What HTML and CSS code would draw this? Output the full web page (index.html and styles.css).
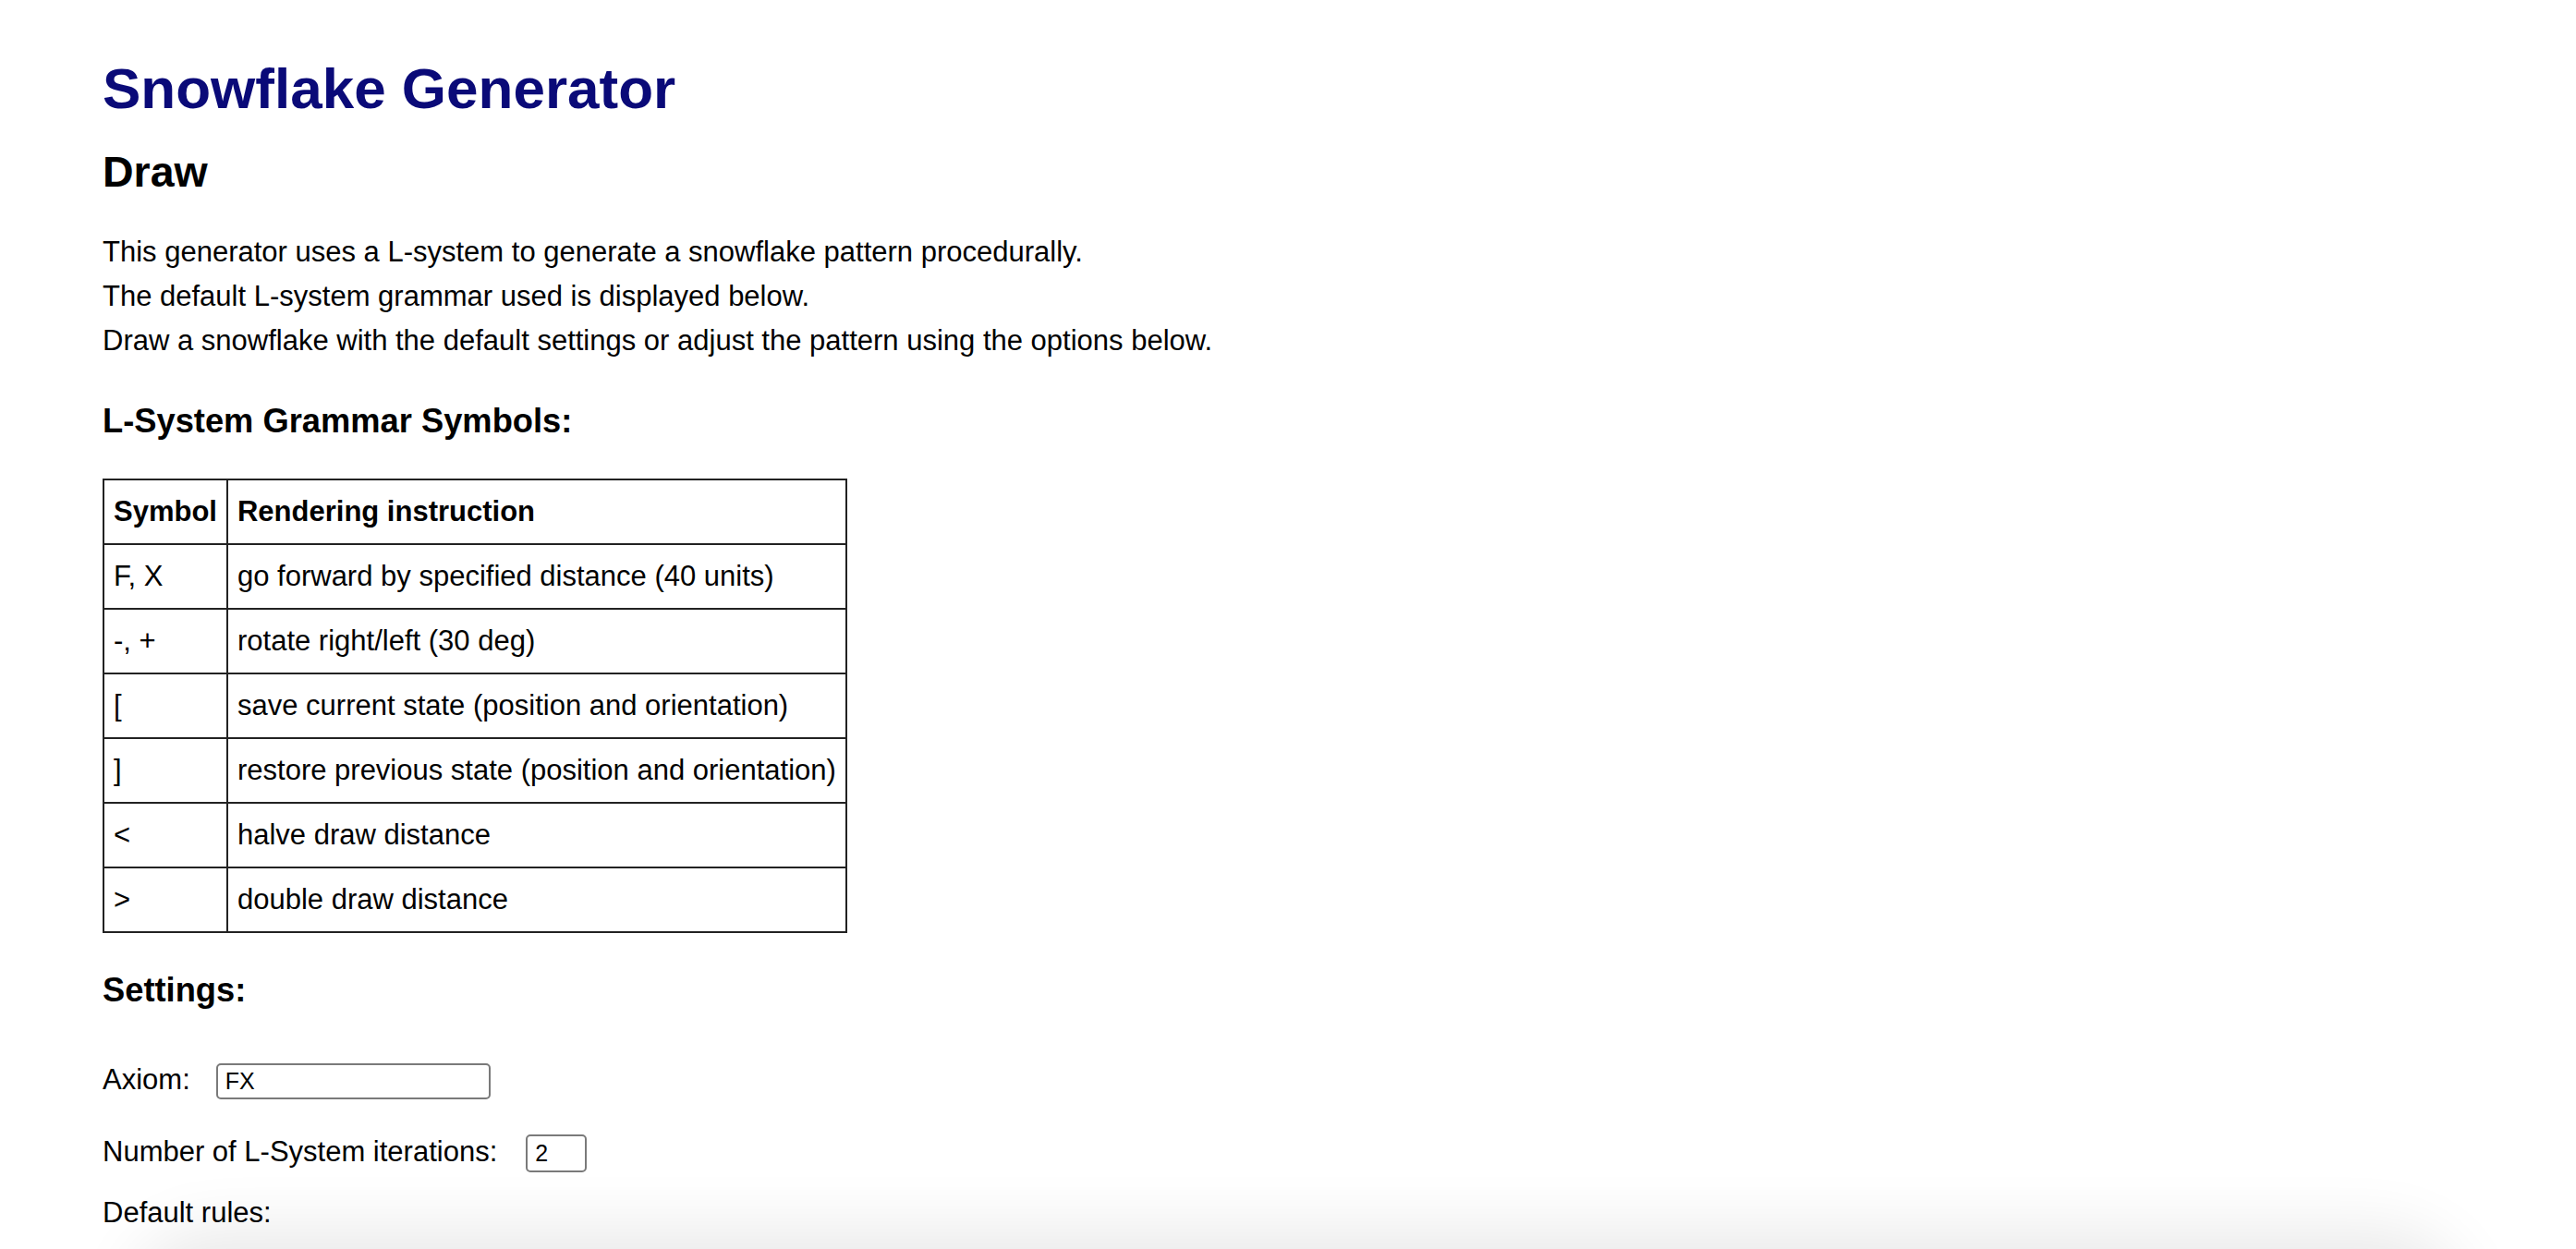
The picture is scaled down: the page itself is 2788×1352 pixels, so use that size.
FILE: index.html
```html
<!DOCTYPE html>
<html lang="en">
<head>
<meta charset="utf-8">
<title>Snowflake Generator</title>
<link rel="stylesheet" href="styles.css">
</head>
<body>
<main class="page">
  <h1 class="title">Snowflake Generator</h1>
  <h2 class="section-title">Draw</h2>
  <div class="intro">
    This generator uses a L-system to generate a snowflake pattern procedurally.<br>
    The default L-system grammar used is displayed below.<br>
    Draw a snowflake with the default settings or adjust the pattern using the options below.
  </div>

  <h3 class="sub-title">L-System Grammar Symbols:</h3>
  <table class="grammar">
    <thead>
      <tr><th>Symbol</th><th>Rendering instruction</th></tr>
    </thead>
    <tbody>
      <tr><td>F, X</td><td>go forward by specified distance (40 units)</td></tr>
      <tr><td>-, +</td><td>rotate right/left (30 deg)</td></tr>
      <tr><td>[</td><td>save current state (position and orientation)</td></tr>
      <tr><td>]</td><td>restore previous state (position and orientation)</td></tr>
      <tr><td>&lt;</td><td>halve draw distance</td></tr>
      <tr><td>&gt;</td><td>double draw distance</td></tr>
    </tbody>
  </table>

  <h3 class="sub-title settings-title">Settings:</h3>
  <form class="settings">
    <div class="field field-axiom">
      <label for="axiom">Axiom:</label>
      <input id="axiom" class="text-input axiom-input" type="text" value="FX">
    </div>
    <div class="field field-iter">
      <label for="iter">Number of L-System iterations:</label>
      <input id="iter" class="text-input iter-input" type="text" value="2">
    </div>
    <div class="field field-rules">
      <span>Default rules:</span>
    </div>
  </form>
</main>
<div class="bottom-shade"></div>
</body>
</html>
```

FILE: styles.css
```css
html, body {
  margin: 0;
  padding: 0;
  background: #ffffff;
}

body {
  font-family: "Liberation Sans", Arial, Helvetica, sans-serif;
  font-size: 31px;
  color: #000000;
  overflow: hidden;
  height: 1352px;
}

.page {
  padding: 60px 111px 0;
}

.title {
  margin: 0;
  font-size: 62px;
  font-weight: bold;
  line-height: normal;
  color: #0a0a78;
}

.section-title {
  margin: 28px 0 0;
  font-size: 46.5px;
  font-weight: bold;
  line-height: normal;
}

.intro {
  margin-top: 36px;
  line-height: 48px;
  color: #000;
}

.sub-title {
  margin: 42px 0 0;
  font-size: 36.3px;
  font-weight: bold;
  line-height: normal;
}

.grammar {
  margin-top: 41px;
  border-collapse: collapse;
  border: 2px solid #222;
}

.grammar th,
.grammar td {
  border: 2px solid #222;
  padding: 16px 10px;
  line-height: 36px;
  text-align: left;
  font-size: 31px;
  white-space: nowrap;
}

.grammar th {
  font-weight: bold;
}

.grammar td {
  color: #000;
}

.settings-title {
  margin-top: 41px;
}

.settings {
  margin: 0;
}

.field {
  display: flex;
  align-items: baseline;
  color: #000;
}

.field-axiom {
  margin-top: 58px;
}

.field-iter {
  margin-top: 38px;
}

.field-rules {
  margin-top: 26px;
}

.text-input {
  box-sizing: border-box;
  margin: 0 0 0 28px;
  font-family: "Liberation Sans", Arial, Helvetica, sans-serif;
  font-size: 25px;
  color: #000;
  background: #fff;
  border: 2px solid #7a7a7a;
  border-radius: 5px;
  padding: 3px 8px;
}

.axiom-input {
  width: 297px;
  height: 39px;
}

.iter-input {
  margin-left: 31px;
  width: 66px;
  height: 41px;
}

.bottom-shade {
  position: fixed;
  left: 170px;
  right: 150px;
  top: 1362px;
  height: 200px;
  border-radius: 60px;
  background: #e6e6e6;
  box-shadow: 0 0 70px 30px rgba(0, 0, 0, 0.09);
  pointer-events: none;
}
```
